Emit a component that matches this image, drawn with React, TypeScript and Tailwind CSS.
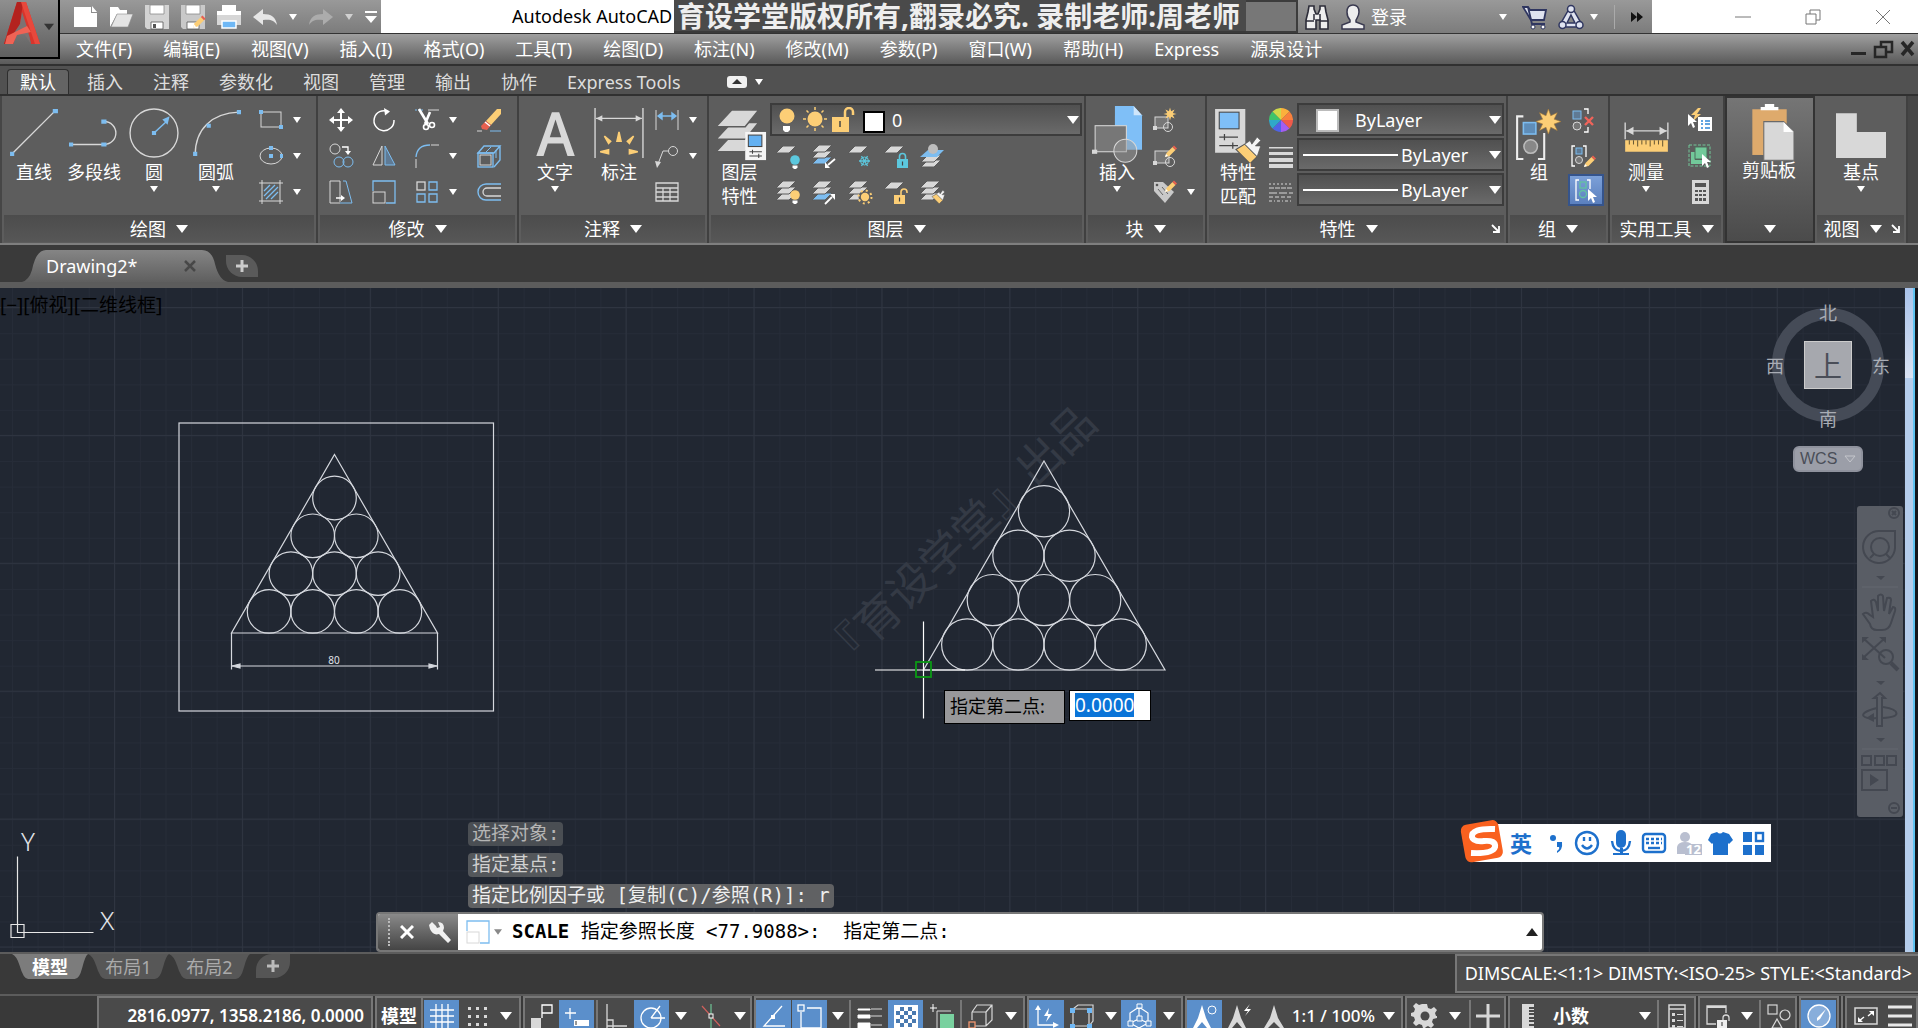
import type { ReactNode } from 'react';

const BLUE = '#7dbdf0';
const GOLD = '#fcce76';
const LIGHT = '#d8d8d8';
const TEAL = '#5cc8de';

const starPoints = (cx: number, cy: number, outer: number, inner: number, spikes: number) =>
  Array.from({ length: spikes * 2 }, (_, i) => {
    const r = i % 2 ? inner : outer;
    const a = (Math.PI * i) / spikes - Math.PI / 2;
    return `${(cx + r * Math.cos(a)).toFixed(1)},${(cy + r * Math.sin(a)).toFixed(1)}`;
  }).join(' ');

const Sheet = ({ x = 0, y = 0, fill = LIGHT }: { x?: number; y?: number; fill?: string }) => (
  <path d={`M${x + 7} ${y}H${x + 20}L${x + 13} ${y + 7}H${x}Z`} fill={fill} stroke="#5a5a5a" strokeWidth="1" />
);

const Pencil = ({ x = 0, y = 0 }: { x?: number; y?: number }) => (
  <g transform={`translate(${x} ${y})`}>
    <path d="M0 11l1.500-4 6-6 3 3-6 6z" fill={GOLD} />
    <path d="M7.500 1l1.500-1.500 3 3-1.500 1.500z" fill="#e8604f" />
    <path d="M0 11l1-3 2 2z" fill="#fff" />
  </g>
);

const Cursor = ({ x = 0, y = 0 }: { x?: number; y?: number }) => (
  <path transform={`translate(${x} ${y})`} d="M0 0v12l3-3 2 5 2-1-2-5h4z" fill="#fff" />
);

const Brush = ({ x = 0, y = 0, s = 1 }: { x?: number; y?: number; s?: number }) => (
  <g transform={`translate(${x} ${y}) scale(${s})`}>
    <path d="M0 4l5-3 7 7-4 4z" fill={GOLD} stroke="#555" strokeWidth=".6" />
    <path d="M5 1l3-2 1 2 3-4 2 2-3 3 3 0-2 6z" fill="#f4f4f4" stroke="#555" strokeWidth=".4" />
  </g>
);

const Bulb = ({ x = 0, y = 0, fill = GOLD }: { x?: number; y?: number; fill?: string }) => (
  <g transform={`translate(${x} ${y})`}>
    <circle cx="5" cy="5" r="4.800" fill={fill} />
    <path d="M2.500 10.500h5v2l-1.500 1.500h-2l-1.500-1.500z" fill="#fff" />
  </g>
);

const Lock = ({ x = 0, y = 0, fill = GOLD, open = false }: { x?: number; y?: number; fill?: string; open?: boolean }) => (
  <g transform={`translate(${x} ${y})`}>
    <path d={open ? 'M7 6V3a3 3 0 0 1 6 0v1' : 'M2.500 6V3.500a3 3 0 0 1 6 0V6'} fill="none" stroke={fill} strokeWidth="1.600" />
    <rect y="6" width="11" height="9" fill={fill} />
    <path d="M5.500 8.500v4" stroke="#444" strokeWidth="1.200" />
  </g>
);

const icons: Record<string, ReactNode> = {
  rect: (
    <>
      <rect x="2" y="4" width="20" height="15" fill="none" stroke={LIGHT} />
      <path d="M0 2h4v4H0zM20 17h4v4h-4z" fill={BLUE} />
    </>
  ),
  ellipse: (
    <>
      <ellipse cx="12" cy="12" rx="11" ry="8" fill="none" stroke={LIGHT} />
      <path d="M10 2h4v4h-4zM10 10h4v4h-4zM21 10h3v4h-3z" fill={BLUE} />
    </>
  ),
  hatch: (
    <>
      <path d="M0 3h24M0 21h24M3 0v24M21 0v24" stroke={LIGHT} />
      <path d="M5 11l6-6M5 16L16 5M7 19L19 7M12 19l7-7" stroke={BLUE} strokeWidth="1.300" />
    </>
  ),
  move: <path d="M12 0l4 5h-3v6h6V8l5 4-5 4v-3h-6v6h3l-4 5-4-5h3v-6H5v3l-5-4 5-4v3h6V5H8z" fill="#fff" />,
  rotate: (
    <>
      <path d="M16 3.500A10 10 0 1 0 22 12" fill="none" stroke="#fff" strokeWidth="1.500" />
      <path d="M12 0l6 3.500-5 4z" fill="#fff" />
    </>
  ),
  trim: (
    <>
      <path d="M0 2h9" stroke={BLUE} strokeDasharray="2 1" />
      <path d="M13 2h11" stroke={LIGHT} />
      <path d="M4 1l9 15M15 4l-5 12" stroke="#fff" strokeWidth="2.600" />
      <circle cx="11" cy="19" r="2.500" fill="none" stroke="#fff" strokeWidth="1.600" />
      <circle cx="17" cy="17" r="2.500" fill="none" stroke="#fff" strokeWidth="1.600" />
    </>
  ),
  erase: (
    <>
      <path d="M9 13L20 1h4v5L14 17z" fill={GOLD} />
      <path d="M9 13l5 4-4 5-5-1-1-3z" fill="#e8604f" />
      <path d="M8 14l5 4" stroke="#fff" strokeWidth="1.500" />
      <path d="M0 23h5" stroke={LIGHT} />
      <path d="M13 23h11" stroke={BLUE} />
    </>
  ),
  copy: (
    <>
      <circle cx="6" cy="5" r="5" fill="none" stroke={LIGHT} />
      <path d="M13 3h6v5" fill="none" stroke="#fff" strokeWidth="1.300" />
      <path d="M16 7h6l-3 4z" fill="#fff" />
      <circle cx="10" cy="18" r="5" fill="none" stroke={BLUE} />
      <circle cx="19" cy="18" r="5" fill="none" stroke={BLUE} />
    </>
  ),
  mirror: (
    <>
      <path d="M10 2v19H1z" fill="none" stroke={LIGHT} />
      <path d="M13 2v19h10z" fill="#5f7a94" stroke={BLUE} />
    </>
  ),
  fillet: (
    <>
      <path d="M1 13Q2 1 15 1" fill="none" stroke={BLUE} strokeWidth="1.300" />
      <path d="M16 1h8M1 15v9" stroke={LIGHT} />
    </>
  ),
  explode: (
    <>
      <path d="M1 9l6-7h16l-6 7zM17 23l6-7V2" fill="none" stroke={BLUE} strokeWidth="1.400" />
      <path d="M9 8l5-5M19 14V6" stroke={BLUE} />
      <rect x="1" y="9" width="15" height="14" fill="none" stroke={BLUE} strokeWidth="1.400" />
      <rect x="3" y="11" width="11" height="10" fill="none" stroke={LIGHT} />
    </>
  ),
  stretch: (
    <>
      <path d="M11 22V1H1v22h10" fill="none" stroke={LIGHT} />
      <path d="M14 1h3l6 22H11" fill="none" stroke={BLUE} />
      <path d="M7 18h6" stroke="#fff" strokeWidth="1.500" />
      <path d="M12 15l4 3-4 3z" fill="#fff" />
    </>
  ),
  scale: (
    <>
      <path d="M1 11V1h22v22H14" fill="none" stroke={BLUE} strokeWidth="1.300" />
      <rect x="1" y="12" width="12" height="11" fill="none" stroke={LIGHT} />
    </>
  ),
  array: (
    <g fill="none">
      <rect x="2" y="2" width="8" height="8" stroke={LIGHT} strokeWidth="1.300" />
      <path d="M14 2h8v8h-8zM2 14h8v8H2zM14 14h8v8h-8z" stroke={BLUE} strokeWidth="1.300" />
    </g>
  ),
  offset: (
    <g fill="none">
      <path d="M24 4H9a7.500 7.500 0 0 0 0 16h15" stroke={BLUE} strokeWidth="1.400" />
      <path d="M24 8H10a4 4 0 0 0 0 8h14" stroke={LIGHT} strokeWidth="1.300" />
    </g>
  ),
  dimLinear: (
    <>
      <path d="M1 2v20M23 2v20" stroke={LIGHT} />
      <path d="M3 8h18M7 5L3 8l4 3zM17 5l4 3-4 3z" fill={BLUE} stroke={BLUE} strokeWidth="1.400" />
    </>
  ),
  leader: (
    <>
      <circle cx="18" cy="7" r="4.500" fill="none" stroke={LIGHT} />
      <path d="M13 7H8L3 20" fill="none" stroke={LIGHT} />
      <path d="M0 17l6 1-4 6z" fill={LIGHT} />
    </>
  ),
  table: <path d="M1 3h22v18H1zM1 8h22M1 12h22M1 17h22M8 8v13M15 8v13" fill="none" stroke={LIGHT} strokeWidth="1.300" />,
  layOff: (
    <>
      <Sheet y={2} />
      <Bulb x={14} y={11} fill={TEAL} />
    </>
  ),
  layIso: (
    <>
      <Sheet y={13} fill={BLUE} />
      <Sheet y={7} />
      <Sheet y={1} />
      <path d="M23 15l-7 6" stroke="#fff" strokeWidth="1.800" />
      <path d="M13 24v-6l5 6z" fill="#fff" />
    </>
  ),
  layFreeze: (
    <>
      <Sheet y={2} />
      <path d="M11 17h11M13.500 12l6 10M19.500 12l-6 10" stroke={TEAL} strokeWidth="1.300" />
      <circle cx="16.500" cy="17" r="4" fill="none" stroke={TEAL} />
    </>
  ),
  layLock: (
    <>
      <Sheet y={2} />
      <Lock x={13} y={9} fill={TEAL} />
    </>
  ),
  layCurrent: (
    <>
      <Sheet y={16} x={1} />
      <Sheet y={11} x={1} />
      <path d="M8 6h16l-7 7H0z" fill={BLUE} />
      <circle cx="13" cy="5" r="5" fill="#bdbdbd" />
    </>
  ),
  layOn: (
    <>
      <Sheet y={13} />
      <Sheet y={7} />
      <Sheet y={1} />
      <Bulb x={14} y={10} />
    </>
  ),
  layUniso: (
    <>
      <Sheet y={13} fill={BLUE} />
      <Sheet y={7} />
      <Sheet y={1} />
      <path d="M13 24l7-7" stroke="#fff" strokeWidth="1.800" />
      <path d="M23 14v6l-5-6z" fill="#fff" />
    </>
  ),
  layThaw: (
    <>
      <Sheet y={13} />
      <Sheet y={7} />
      <Sheet y={1} />
      <circle cx="17" cy="17" r="6.500" fill="#5d5d5d" stroke={GOLD} strokeWidth="2" strokeDasharray="2 3.100" />
      <circle cx="17" cy="17" r="4.200" fill={GOLD} />
    </>
  ),
  layUnlock: (
    <>
      <Sheet y={2} />
      <Lock x={10} y={9} open />
    </>
  ),
  layMatch: (
    <>
      <Sheet y={13} />
      <Sheet y={7} />
      <Sheet y={1} />
      <Brush x={12} y={13} s={0.9} />
    </>
  ),
  blockNew: (
    <>
      <rect x="2" y="9" width="13" height="11" fill="#777" stroke={LIGHT} />
      <circle cx="15" cy="19" r="4.500" fill="none" stroke={LIGHT} />
      <path d="M0 18h4v4H0z" fill={LIGHT} />
      <polygon points={starPoints(17, 6, 6.500, 3, 8)} fill={GOLD} />
    </>
  ),
  blockEdit: (
    <>
      <rect x="2" y="7" width="14" height="12" fill="#777" stroke={LIGHT} />
      <circle cx="17" cy="18" r="4.500" fill="none" stroke={LIGHT} />
      <path d="M0 17h4v4H0z" fill={LIGHT} />
      <Pencil x={12} y={2} />
    </>
  ),
  blockAttr: (
    <>
      <path d="M1 2h9l11 10-9 11L1 11z" fill="#c9c9c9" />
      <path d="M5 9l5 6M9 7l6 7" stroke="#666" />
      <circle cx="4" cy="5" r="1.300" fill="#555" />
      <Pencil x={12} y={1} />
    </>
  ),
  lineweight: <path d="M0 3h24v1.500H0zM0 8h24v3H0zM0 14h24v4H0zM0 20h24v4H0z" fill={LIGHT} />,
  linetype: (
    <g stroke={LIGHT} strokeWidth="1.200">
      <path d="M0 4h24" strokeDasharray="2 2" />
      <path d="M0 8h24" strokeDasharray="5 1" />
      <path d="M0 13h24" strokeDasharray="8 2" />
      <path d="M0 17h24" strokeDasharray="4 2" />
      <path d="M0 21h24" strokeDasharray="3 2 1 2" />
    </g>
  ),
  ungroup: (
    <>
      <path d="M12 1h4v5M12 24h4v-5" fill="none" stroke="#fff" strokeWidth="1.300" />
      <rect x="1" y="3" width="8" height="8" fill="#5f7a94" stroke={BLUE} />
      <circle cx="5" cy="18" r="4" fill="#777" stroke={LIGHT} />
      <path d="M13 9l8 8M21 9l-8 8" stroke="#f0645a" strokeWidth="2.400" />
    </>
  ),
  groupEdit: (
    <>
      <path d="M3 2H0v20h3M11 2h3v11" fill="none" stroke="#fff" strokeWidth="1.300" />
      <rect x="4" y="4" width="6" height="6" fill="#5f7a94" stroke={BLUE} />
      <circle cx="7" cy="16" r="3.500" fill="#777" stroke={LIGHT} />
      <Pencil x={12} y={12} />
    </>
  ),
  groupSelect: (
    <>
      <path d="M5 2H2v20h3M13 2h3v9" fill="none" stroke="#fff" strokeWidth="1.300" />
      <rect x="6" y="4" width="6" height="6" fill="none" stroke="#62c3a0" strokeWidth="1.300" />
      <circle cx="9" cy="16" r="3.500" fill="none" stroke="#62c3a0" strokeWidth="1.300" />
      <Cursor x={14} y={11} />
    </>
  ),
  quickSelect: (
    <>
      <path d="M10 0L3 7h4l-2 6 8-7H9l4-6z" fill={GOLD} />
      <rect x="10" y="9" width="14" height="14" fill="#fff" />
      <path d="M13 13h2M17 13h5M13 16h2M17 16h5M13 20h2M17 20h5" stroke="#2f86d6" strokeWidth="1.500" />
      <Cursor x={0} y={6} />
    </>
  ),
  selectAll: (
    <>
      <rect x="1" y="1" width="21" height="21" fill="none" stroke="#72c99a" strokeDasharray="3 1.500" />
      <path d="M3 8h4v8h9v4H3z" fill="#72c99a" />
      <rect x="7" y="3" width="12" height="12" fill="#72c99a" stroke="#4c6e5c" />
      <Cursor x={14} y={10} />
    </>
  ),
  calc: (
    <>
      <rect x="4" y="0" width="17" height="24" fill={LIGHT} />
      <path d="M7 3h11v4H7z" fill="#555" />
      <path d="M7 10h3v2H7zM11 10h3v2h-3zM15 10h3v2h-3zM7 14h3v2H7zM11 14h3v2h-3zM15 14h3v2h-3zM7 18h3v3H7zM11 18h3v3h-3zM15 18h3v3h-3z" fill="#555" />
    </>
  ),
  new: <path d="M1 2h17v6h6v14H1z M19 1l5 6h-5z" fill="#fff" />,
  open: (
    <>
      <path d="M1 22V2h8l2 3h7v4H8z" fill="#fff" />
      <path d="M8 9h16l-5 13H2z" fill="#e4e4e4" stroke="#8c8c8c" strokeWidth=".6" />
    </>
  ),
  save: (
    <>
      <path d="M0 0h24v24H2l-2-2z" fill="#d3d3d3" />
      <path d="M5 0h14v9H5z" fill="#fff" stroke="#8a8a8a" strokeWidth=".8" />
      <path d="M6 17h12v7H6z" fill="#fff" stroke="#555" strokeWidth=".8" />
      <path d="M8 19h3v4H8z" fill="#555" />
    </>
  ),
  saveAs: (
    <>
      <path d="M0 0h24v24H2l-2-2z" fill="#c9c9c9" />
      <path d="M5 0h14v9H5z" fill="#fff" stroke="#8a8a8a" strokeWidth=".8" />
      <path d="M6 17h12v7H6z" fill="#fff" stroke="#555" strokeWidth=".8" />
      <g transform="translate(12 11) scale(1.050)">
        <Pencil />
      </g>
    </>
  ),
  print: (
    <>
      <path d="M0 8h24v12H0z" fill="#d6d6d6" />
      <path d="M5 0h14v7H5zM0 6h24v4H0z" fill="#fff" />
      <path d="M5 16h14v7H5z" fill="#6fb8f5" stroke="#fff" strokeWidth="1.500" />
    </>
  ),
  undo: <path d="M0 12L10 4v5c8 0 13 3 14 11-3-5-7-6-14-5v5z" fill="#e6e6e6" />,
  redo: <path d="M24 12L14 4v5C6 9 1 12 0 20c3-5 7-6 14-5v5z" fill="#acacac" />,
  infer: (
    <>
      <path d="M13 14V1h10v8H13" fill="none" stroke="#fff" strokeWidth="1.300" />
      <path d="M2 14h10v10H2z" fill={LIGHT} />
    </>
  ),
  grid: <path d="M6 0v24M12 0v24M18 0v24M0 6h24M0 12h24M0 18h24" stroke="#fff" strokeWidth="1.300" />,
  snap: (
    <path
      d="M3 3h3v3H3zM11 3h3v3h-3zM19 3h3v3h-3zM3 11h3v3H3zM11 11h3v3h-3zM19 11h3v3h-3zM3 19h3v3H3zM11 19h3v3h-3zM19 19h3v3h-3z"
      fill={LIGHT}
    />
  ),
  dynInput: (
    <>
      <path d="M0 9h11M5 4v11" stroke="#fff" strokeWidth="1.300" />
      <rect x="9" y="16" width="15" height="6" fill="#fff" />
      <path d="M11 17v4" stroke="#333" />
    </>
  ),
  ortho: <path d="M3 0v24M3 22h20M3 16h6v8" fill="none" stroke={LIGHT} strokeWidth="1.300" />,
  polar: (
    <>
      <circle cx="11" cy="14" r="10" fill="none" stroke="#fff" strokeWidth="1.300" />
      <path d="M11 14h14M11 14L20 2" stroke="#fff" strokeWidth="1.300" />
    </>
  ),
  iso: (
    <>
      <path d="M3 2l18 20" stroke="#d0605c" strokeWidth="1.200" />
      <path d="M12 0v24" stroke="#6fc596" strokeWidth="1.200" />
      <rect x="10" y="10" width="4" height="4" fill="#4a4a4a" stroke="#fff" />
    </>
  ),
  track: (
    <>
      <path d="M20 2L2 22h21" fill="none" stroke="#fff" strokeWidth="1.300" />
      <rect x="9" y="11" width="4" height="4" fill="#fff" />
    </>
  ),
  osnap: (
    <>
      <path d="M9 4h14v20H3V8" fill="none" stroke="#fff" strokeWidth="1.300" />
      <rect x="0" y="1" width="6" height="6" fill="none" stroke="#fff" strokeWidth="1.300" />
    </>
  ),
  lwt: (
    <>
      <path d="M0 5h12v1H0zM0 11h12v3H0zM0 19h12v5H0z" fill="#fff" stroke="#fff" />
      <path d="M13 5h11M13 12h11M13 21h11" stroke={LIGHT} />
    </>
  ),
  transparency: (
    <>
      <rect x="0" y="1" width="24" height="23" fill="#fff" />
      {Array.from({ length: 25 }, (_, i) =>
        i % 2 ? <rect key={i} x={2 + (i % 5) * 4} y={3 + Math.floor(i / 5) * 4} width="4" height="4" fill="#4a7ab0" /> : null
      )}
    </>
  ),
  cycling: (
    <>
      <path d="M0 4h7M3 0v8" stroke="#fff" />
      <path d="M7 24V7h14" fill="none" stroke={LIGHT} />
      <rect x="10" y="10" width="14" height="14" fill="#79d19f" />
    </>
  ),
  snap3d: (
    <>
      <path d="M3 8l5-7h15v15l-6 6H6M3 8h14v14M17 8l6-7M3 8v8" fill="none" stroke={LIGHT} strokeWidth="1.200" />
      <rect x="0" y="18" width="6" height="6" fill="none" stroke="#f2966e" strokeWidth="1.300" />
    </>
  ),
  ucs: (
    <>
      <path d="M3 4v17h17" fill="none" stroke="#fff" strokeWidth="1.300" />
      <path d="M0 6l3-5 3 5zM18 18l6 3-6 3z" fill="#fff" />
      <path d="M14 4L9 12h4l-2 6 6-8h-4z" fill="#fff" />
    </>
  ),
  filter: (
    <>
      <path d="M3 5h16v17H3zM3 5l5-4h15v16l-4 5" fill="none" stroke={LIGHT} strokeWidth="1.200" />
      <path d="M0 4h5v5H0zM17 4h5v5h-5zM0 20h5v4H0zM17 20h5v4h-5z" fill="#6fb8f5" />
    </>
  ),
  gizmo: (
    <>
      <path d="M12 3l9 6v10l-9 5-9-5V9zM12 3v12M3 19l9-4 9 4" fill="none" stroke="#fff" strokeWidth="1.200" />
      <path d="M10 0h5v4h-5zM1 17h5v5H1zM19 17h5v5h-5zM10 12h5v5h-5z" fill="#5f92cc" stroke="#fff" />
    </>
  ),
  annoA: (
    <>
      <path d="M9 1l4 13 5 10h-4l-5-6-5 6H0l5-10z" fill="#fff" />
      <circle cx="19" cy="6" r="4" fill="none" stroke="#fff" />
    </>
  ),
  annoB: (
    <>
      <path d="M9 1l4 13 5 10h-4l-5-6-5 6H0l5-10z" fill={LIGHT} />
      <path d="M22 0l-6 7h4l-3 5 6-7h-4z" fill="#fff" />
    </>
  ),
  annoC: <path d="M11 1l4 13 6 10h-4l-6-6-6 6H1l6-10z" fill={LIGHT} />,
  plus: <path d="M12 0v24M0 12h24" stroke={LIGHT} strokeWidth="3" />,
  units: <path d="M6 0h12v3h-5v2h5v1h-5v2h5v1h-5v2h5v2h-5v2h5v1h-5v2h5v2h-5v2h5v4H6z" fill={LIGHT} />,
  props: (
    <>
      <path d="M4 1h16v23H4zM4 5h16" fill="none" stroke={LIGHT} strokeWidth="1.500" />
      <path d="M7 9h3v3H7zM7 15h3v3H7zM7 21h3v3H7zM12 10h6v1h-6zM12 16h6v1h-6zM12 22h6v1h-6z" fill={LIGHT} />
    </>
  ),
  lockUi: (
    <>
      <path d="M20 9V2H1v18h9" fill="none" stroke={LIGHT} strokeWidth="1.300" />
      <path d="M1 2h19v2H1z" fill={LIGHT} />
      <path d="M17 17v-3a3 3 0 0 1 6 0v3" fill="none" stroke={LIGHT} strokeWidth="1.300" />
      <path d="M11 16h10v8H11z" fill="#eee" />
      <path d="M16 18v4" stroke="#333" />
    </>
  ),
  isolate: (
    <g fill="none" stroke={LIGHT} strokeWidth="1.200">
      <rect x="1" y="1" width="9" height="9" />
      <circle cx="18" cy="11" r="5" />
      <path d="M10 15l5 9H5z" />
    </g>
  ),
  perf: (
    <>
      <circle cx="12" cy="12" r="11" fill="#88aedb" stroke="#fff" strokeWidth="1.300" />
      <path d="M19 5l-6 10-3 2v-3z" fill="#fff" />
    </>
  ),
  clean: (
    <>
      <rect x="1" y="4" width="22" height="16" fill="none" stroke={LIGHT} strokeWidth="1.500" />
      <path d="M15 7h5v5zM4 13v5h5z" fill="#fff" />
      <path d="M14 12l5-4M5 17l5-4" stroke="#fff" strokeWidth="1.500" />
    </>
  ),
  menu: <path d="M0 3h24M0 12h24M0 21h24" stroke="#e8e8e8" strokeWidth="3" />,
  gear: (
    <>
      <path
        d="M10 0h4l1 4 3 1 3-2 3 3-2 3 1 3h1v2l-4 1-1 3 2 3-3 3-3-2-2 1-1 1h-2l-1-3-3-1-3 2-3-3 2-3-1-3-3-1v-3l3-1 1-3-2-3 3-3 3 2 3-1z"
        fill={LIGHT}
      />
      <circle cx="12" cy="12" r="4.500" fill="#4a4a4a" />
    </>
  ),
};

const Icon = ({ name }: { name: string }) => (
  <svg className="size-6 shrink-0 overflow-visible" viewBox="0 0 24 24" aria-hidden="true">
    {icons[name]}
  </svg>
);

const Caret = ({ big = false }: { big?: boolean }) => (
  <svg className={big ? 'h-2 w-3 shrink-0' : 'h-[6px] w-2 shrink-0'} viewBox="0 0 12 8" preserveAspectRatio="none" aria-hidden="true">
    <path d="M0 0h12L6 8z" fill="#fff" />
  </svg>
);

const Tool = ({ name, label, caret = false }: { name: string; label: string; caret?: boolean }) => (
  <button className="flex h-9 items-center gap-[10px]" aria-label={label}>
    <Icon name={name} />
    {caret && <Caret />}
  </button>
);

interface BigProps {
  label: string[];
  width: string;
  caret?: boolean;
  children: ReactNode;
}

const BigTool = ({ label, width, caret = false, children }: BigProps) => (
  <button className={`flex shrink-0 flex-col items-center self-start pt-[6px] ${width}`}>
    <svg className="mb-[2px] size-[50px] overflow-visible" viewBox="0 0 48 48" aria-hidden="true">
      {children}
    </svg>
    {label.map((l) => (
      <span key={l} className="leading-6 whitespace-nowrap">
        {l}
      </span>
    ))}
    {caret && (
      <span className="mt-[2px]">
        <Caret />
      </span>
    )}
  </button>
);

interface PanelProps {
  title: string;
  width: string;
  launcher?: boolean;
  children: ReactNode;
}

const Panel = ({ title, width, launcher = false, children }: PanelProps) => (
  <section className={`flex shrink-0 flex-col border-r-2 border-[#404040] bg-[#5d5d5d] ${width}`}>
    <div className="flex h-[119px] pt-[6px]">{children}</div>
    <div
      className={`relative mx-[2px] flex h-[27px] items-center justify-center bg-linear-to-b from-[#4c4c4c] to-[#575757] ${
        launcher ? 'pr-4' : ''
      }`}
    >
      <button className="flex items-center gap-[10px]">
        {title}
        <Caret big />
      </button>
      {launcher && (
        <svg className="absolute right-1 size-[9px]" viewBox="0 0 9 9" aria-hidden="true">
          <path d="M1 1l6 6M8 2v6H2" fill="none" stroke="#fff" strokeWidth="1.800" />
        </svg>
      )}
    </div>
  </section>
);

const menus = [
  '文件(F)', '编辑(E)', '视图(V)', '插入(I)', '格式(O)', '工具(T)', '绘图(D)', '标注(N)',
  '修改(M)', '参数(P)', '窗口(W)', '帮助(H)', 'Express', '源泉设计',
];

const ribbonTabs = ['默认', '插入', '注释', '参数化', '视图', '管理', '输出', '协作', 'Express Tools'];

const TitleBar = () => (
  <header className="relative">
    <button className="absolute top-0 left-0 z-10 flex h-[59px] w-[60px] items-center border-r-2 border-b-2 border-black bg-linear-to-b from-[#8f8f8f] to-[#606060]" aria-label="A">
      <svg className="mb-3 ml-1 h-[46px] w-9" viewBox="0 0 36 46" preserveAspectRatio="none" aria-hidden="true">
        <path d="M0 44L13 2h9l14 42h-9l-2-9-12-2-4 11z" fill="#d8352c" />
        <path d="M13 2h6l-3 22-7 20H0z" fill="#b3221f" />
        <path d="M16 24l2-12 5 15 4 17-6-9-11-2z" fill="#7d7272" />
        <path d="M3 36l20-10 4 6-14 3-4 9H1z" fill="#ef6355" />
        <path d="M22 2l14 42h-5L17 2z" fill="#e8483c" />
      </svg>
      <svg className="mb-1 ml-1 h-2 w-[10px]" viewBox="0 0 12 8" aria-hidden="true">
        <path d="M0 0h12L6 8z" fill="#333" />
      </svg>
    </button>
    <div className="flex h-[33px] bg-white">
      <div className="flex w-[381px] shrink-0 items-center gap-3 bg-linear-to-b from-[#999] to-[#7c7c7c] pl-[73px]">
        {['new', 'open', 'save', 'saveAs', 'print', 'undo'].map((n) => (
          <button key={n} aria-label={n}>
            <Icon name={n} />
          </button>
        ))}
        <Caret />
        <button aria-label="redo">
          <Icon name="redo" />
        </button>
        <span className="opacity-60">
          <Caret />
        </span>
        <svg className="h-3 w-3" viewBox="0 0 12 12" aria-hidden="true">
          <path d="M0 0h12v2H0zM0 5h12L6 12z" fill="#fff" />
        </svg>
      </div>
      <div className="flex-1 pl-[131px] leading-[33px] whitespace-nowrap text-black">Autodesk AutoCAD</div>
      <div className="flex w-[572px] shrink-0 items-center border-b-2 border-[#3a3a3a] bg-[#4a4a4a] pl-[3px] text-[28px] leading-[30px] font-bold whitespace-nowrap text-[#eee]">
        育设学堂版权所有,翻录必究. 录制老师:周老师
      </div>
      <div className="w-[52px] shrink-0 border-2 border-l-0 border-[#3c3c3c] bg-[#777]" />
      <div className="flex w-[354px] shrink-0 items-center bg-linear-to-b from-[#999] to-[#7c7c7c] pl-[6px]">
        <svg className="size-[26px]" viewBox="0 0 26 26" aria-hidden="true">
          <path d="M5 2h5v3l2 5h2l2-5V2h5l1 6 2 8v9h-8v-9h-4v9H2v-9l2-8z" fill="#eee" stroke="#2c2c38" strokeWidth="1.600" />
          <path d="M2 17h8M16 17h8M10 10v6M16 10v6" stroke="#2c2c38" strokeWidth="1.500" />
        </svg>
        <svg className="ml-[10px] size-[26px]" viewBox="0 0 26 26" aria-hidden="true">
          <path d="M13 1c4 0 6 3 6 7s-2 6-3 8v2l8 3v4H2v-4l8-3v-2C8 14 7 12 7 8s2-7 6-7z" fill="#eee" stroke="#3a3a50" strokeWidth="1.500" />
        </svg>
        <button className="ml-[5px]">登录</button>
        <span className="ml-[92px]">
          <Caret />
        </span>
        <svg className="ml-[15px] size-[26px]" viewBox="0 0 26 26" aria-hidden="true">
          <path d="M1 3h5l2 3h16l-2 10H9z" fill="#dfe3f0" stroke="#2f3660" strokeWidth="1.800" />
          <path d="M6 3l4 17h13" fill="none" stroke="#2f3660" strokeWidth="1.800" />
          <circle cx="11" cy="23" r="2" fill="#fff" stroke="#2f3660" />
          <circle cx="21" cy="23" r="2" fill="#fff" stroke="#2f3660" />
        </svg>
        <svg className="ml-[10px] size-[26px]" viewBox="0 0 26 26" aria-hidden="true">
          <g fill="#dfe3f0" stroke="#2f3660" strokeWidth="1.500">
            <path d="M11 5L3 19l3 4h14l3-4L15 5zM13 11l4 8H9z" fillRule="evenodd" />
            <circle cx="13" cy="5" r="3.500" />
            <circle cx="4.500" cy="21" r="3.500" />
            <circle cx="21.500" cy="21" r="3.500" />
          </g>
        </svg>
        <span className="ml-[6px]">
          <Caret />
        </span>
        <span className="ml-4 h-6 w-px bg-[#aaa]" />
        <svg className="ml-4 h-[10px] w-3" viewBox="0 0 12 10" aria-hidden="true">
          <path d="M0 0l6 5-6 5zM6 0l6 5-6 5z" fill="#111" />
        </svg>
      </div>
      <div className="flex w-[266px] shrink-0 items-center justify-end gap-[54px] pr-[27px]">
        {['M0 8h16', 'M1 5h10v10H1zM5 5V1h10v10h-4', 'M1 1l14 14M15 1L1 15'].map((d) => (
          <button key={d}>
            <svg className="size-4" viewBox="0 0 16 16" aria-hidden="true">
              <path d={d} fill="none" stroke="#777" />
            </svg>
          </button>
        ))}
      </div>
    </div>
    <nav className="flex h-[33px] items-center gap-px border-t border-b-2 border-t-[#333] border-b-[#303030] bg-linear-to-b from-[#a0a0a0] to-[#5a5a5a] pl-[61px]">
      {menus.map((m) => (
        <button key={m} className="px-[15px] leading-[30px] whitespace-nowrap">
          {m}
        </button>
      ))}
      <svg className="mr-[3px] ml-auto h-5 w-[64px]" viewBox="0 0 64 20" aria-hidden="true">
        <path d="M0 13h15v3H0z" fill="#262626" />
        <path d="M24 8h11v10H24zM30 8V3h11v10h-6" fill="none" stroke="#262626" strokeWidth="2.500" />
        <path d="M51 3l11 13M62 3L51 16" stroke="#262626" strokeWidth="3.500" />
      </svg>
    </nav>
    <div className="flex h-[30px] items-end gap-[6px] border-b-2 border-[#303030] bg-[#515151] pl-[7px] text-[#ddd]">
      {ribbonTabs.map((t, i) => (
        <button
          key={t}
          className={
            i === 0
              ? 'h-[25px] rounded-t-sm border border-b-0 border-[#2e2e2e] bg-[#646464] px-3 leading-6 text-white'
              : 'h-[25px] px-3 leading-6 whitespace-nowrap'
          }
        >
          {t}
        </button>
      ))}
      <button className="ml-7 flex h-[25px] items-center gap-2" aria-label="最小化">
        <svg className="h-3 w-5" viewBox="0 0 20 12" aria-hidden="true">
          <rect width="20" height="12" rx="3" fill="#f0f0f0" />
          <path d="M5 8h10l-5-5z" fill="#333" />
        </svg>
        <Caret />
      </button>
    </div>
  </header>
);

const ComboCaret = () => (
  <span className="pointer-events-none absolute top-1/2 right-[3px] flex -translate-y-1/2">
    <Caret big />
  </span>
);

const comboClass =
  'h-full w-full appearance-none border-2 border-[#3c3c3c] bg-linear-to-b from-[#505050] to-[#6a6a6a] leading-7 text-white';

const Ribbon = () => (
  <div className="flex h-[149px] border-b-2 border-[#7f7f7f] bg-[#464646] pl-[2px]">
    <Panel title="绘图" width="w-[316px]">
      <BigTool label={['直线']} width="w-[64px]">
        <path d="M3 44L44 3" stroke={LIGHT} strokeWidth="1.300" />
        <path d="M1 42h4v4H1zM42 1h5v4h-5z" fill={BLUE} />
      </BigTool>
      <BigTool label={['多段线']} width="w-[56px]">
        <path d="M2 35h32a11 11 0 0 0 0-22" fill="none" stroke={LIGHT} strokeWidth="1.300" />
        <path d="M0 33h4v4H0zM31 33h5v4h-5zM31 11h5v4h-5z" fill={BLUE} />
      </BigTool>
      <BigTool label={['圆']} width="w-[64px]" caret>
        <circle cx="24" cy="24" r="23" fill="none" stroke={LIGHT} strokeWidth="1.300" />
        <path d="M24 24L37 12" stroke={BLUE} strokeWidth="1.500" />
        <path d="M22 22h4v4h-4zM39 8l-2 8-5-5z" fill={BLUE} />
      </BigTool>
      <BigTool label={['圆弧']} width="w-[60px]" caret>
        <path d="M4 45C4 20 20 5 46 4" fill="none" stroke={LIGHT} strokeWidth="1.300" />
        <path d="M2 42h4v4H2zM44 2h4v4h-4zM15 15h4v4h-4z" fill={BLUE} />
      </BigTool>
      <div className="ml-[13px] flex flex-col">
        <Tool name="rect" label="矩形" caret />
        <Tool name="ellipse" label="椭圆" caret />
        <Tool name="hatch" label="图案填充" caret />
      </div>
    </Panel>
    <Panel title="修改" width="w-[201px]">
      <div className="ml-[11px] grid grid-cols-[43px_43px_62px_24px] content-start">
        <Tool name="move" label="移动" />
        <Tool name="rotate" label="旋转" />
        <Tool name="trim" label="修剪" caret />
        <Tool name="erase" label="删除" />
        <Tool name="copy" label="复制" />
        <Tool name="mirror" label="镜像" />
        <Tool name="fillet" label="圆角" caret />
        <Tool name="explode" label="分解" />
        <Tool name="stretch" label="拉伸" />
        <Tool name="scale" label="缩放" />
        <Tool name="array" label="阵列" caret />
        <Tool name="offset" label="偏移" />
      </div>
    </Panel>
    <Panel title="注释" width="w-[190px]">
      <BigTool label={['文字']} width="ml-1 w-[64px]" caret>
        <path d="M6 46L21 4h7l15 42h-7l-4-12H17l-4 12z M19 28h11l-5.500-17z" fill={LIGHT} fillRule="evenodd" />
      </BigTool>
      <BigTool label={['标注']} width="w-[64px]">
        <path d="M1 0v48M47 0v48M2 10h44" stroke={LIGHT} strokeWidth="1.300" />
        <path d="M2 10l6-3v6zM46 10l-6-3v6z" fill={LIGHT} />
        <path d="M22 32l2-9 2 9zM14 34l-4-7 6 5zM34 34l4-7-6 5zM6 42l8-2v4zM42 42l-8-2v4z" fill={GOLD} stroke={GOLD} strokeWidth="1.500" />
      </BigTool>
      <div className="ml-[4px] flex flex-col">
        <Tool name="dimLinear" label="线性" caret />
        <Tool name="leader" label="引线" caret />
        <Tool name="table" label="表格" />
      </div>
    </Panel>
    <Panel title="图层" width="w-[377px]">
      <BigTool label={['图层', '特性']} width="w-[61px]">
        {[34, 22, 10].map((y) => (
          <path key={y} d={`M16 ${y - 8}h26L29 ${y + 8}H1z`} fill={LIGHT} stroke="#5d5d5d" strokeWidth="1.500" />
        ))}
        <rect x="29" y="23" width="20" height="27" fill="#f5f5f5" />
        <rect x="32" y="26" width="13" height="11" fill="#64b1f2" stroke="#444" />
        <path d="M33 42h12M33 46h12M36 40v4M42 44v4" stroke="#444" />
      </BigTool>
      <div className="flex flex-1 flex-col pr-[2px]">
        <div className="relative mt-px mb-[2px] h-[33px]">
          <select aria-label="图层" className={`${comboClass} pl-[120px]`}>
            <option>0</option>
          </select>
          <svg className="pointer-events-none absolute top-1 left-2 h-[26px] w-[108px]" viewBox="0 0 108 26" aria-hidden="true">
            <circle cx="9" cy="9" r="7.500" fill={GOLD} />
            <path d="M5 19h7v4l-2 2H7l-2-2z" fill="#fff" />
            <path
              d="M37 0v3M37 21v3M25 12h3M46 12h3M28.500 3.500l2 2M43.500 18.500l2 2M28.500 20.500l2-2M43.500 5.500l2-2"
              stroke={GOLD}
              strokeWidth="1.500"
            />
            <circle cx="37" cy="12" r="7.500" fill={GOLD} />
            <path d="M67 11V5a4 4 0 0 1 8 0v3" fill="none" stroke={GOLD} strokeWidth="2.500" />
            <path d="M54 10h17v15H54z" fill={GOLD} />
            <path d="M62 14v6" stroke="#444" strokeWidth="1.500" />
            <rect x="86" y="5" width="20" height="20" fill="#fff" stroke="#000" strokeWidth="2" />
          </svg>
          <ComboCaret />
        </div>
        <div className="ml-[6px] grid grid-cols-[repeat(5,36px)]">
          {['layOff', 'layIso', 'layFreeze', 'layLock', 'layCurrent', 'layOn', 'layUniso', 'layThaw', 'layUnlock', 'layMatch'].map((n) => (
            <Tool key={n} name={n} label={n} />
          ))}
        </div>
      </div>
    </Panel>
    <Panel title="块" width="w-[121px]">
      <BigTool label={['插入']} width="w-[62px]" caret>
        <path d="M22-2h18l8 9v33H22z" fill="#7fbff7" />
        <path d="M40-2l8 9h-8z" fill="#cfe6fb" />
        <rect x="3" y="17" width="30" height="25" fill="#777" stroke={LIGHT} />
        <circle cx="32" cy="41" r="11" fill="#999" fillOpacity=".5" stroke={LIGHT} />
        <path d="M0 40h5v4H0z" fill={LIGHT} />
      </BigTool>
      <div className="ml-[5px] flex flex-col">
        <Tool name="blockNew" label="创建块" />
        <Tool name="blockEdit" label="编辑块" />
        <Tool name="blockAttr" label="编辑属性" caret />
      </div>
    </Panel>
    <Panel title="特性" width="w-[301px]" launcher>
      <BigTool label={['特性', '匹配']} width="w-[62px]">
        <path d="M2 1h29v42H2z" fill={LIGHT} />
        <rect x="6" y="4" width="19" height="16" fill="#7fbff7" stroke="#444" />
        <path d="M6 28h18M6 36h18M11 25v6M19 33v6" stroke="#444" strokeWidth="1.200" />
        <Brush x={22} y={33} s={1.7} />
      </BigTool>
      <div className="flex w-[28px] flex-col">
        <button className="flex h-9 items-center" aria-label="颜色">
          <svg className="size-6" viewBox="-12 -12 24 24" aria-hidden="true">
            {['#fbb03c', '#f9803c', '#ef5a4a', '#a35df0', '#4f63e6', '#2fa8c9', '#3fc46b', '#cfd94a'].map((c, i) => (
              <path key={c} d="M0 0V-12A12 12 0 0 1 8.500-8.500Z" fill={c} transform={`rotate(${i * 45})`} />
            ))}
          </svg>
        </button>
        <Tool name="lineweight" label="线宽" />
        <Tool name="linetype" label="线型" />
      </div>
      <div className="flex flex-1 flex-col gap-[2px] pt-px pr-[2px]">
        <div className="relative h-[33px]">
          <select aria-label="颜色" className={`${comboClass} pl-14`}>
            <option>ByLayer</option>
          </select>
          <span className="pointer-events-none absolute top-[6px] left-[19px] size-[23px] border-2 border-[#bbb] bg-white" />
          <ComboCaret />
        </div>
        {['线宽值', '线型值'].map((l) => (
          <div key={l} className="relative h-[33px]">
            <select aria-label={l} className={`${comboClass} pl-[102px]`}>
              <option>ByLayer</option>
            </select>
            <span className="pointer-events-none absolute top-4 left-[6px] h-[2px] w-[95px] bg-white" />
            <ComboCaret />
          </div>
        ))}
      </div>
    </Panel>
    <Panel title="组" width="w-[102px]">
      <BigTool label={['组']} width="w-[62px]">
        <path d="M9 8H3v41h6M23 49h6V24" fill="none" stroke="#eee" strokeWidth="2" />
        <rect x="9" y="14" width="12" height="11" fill="#5f8db8" stroke={BLUE} strokeWidth="1.500" />
        <circle cx="16" cy="37" r="6.500" fill="#888" stroke="#bbb" strokeWidth="1.500" />
        <polygon points={starPoints(33, 13, 12, 6, 8)} fill={GOLD} stroke="#a77c3a" strokeWidth=".6" />
      </BigTool>
      <div className="ml-[2px] flex flex-col">
        <Tool name="ungroup" label="解除编组" />
        <Tool name="groupEdit" label="组编辑" />
        <button className="-ml-1 flex h-8 w-9 items-center justify-center border-2 border-[#35548c] bg-linear-to-b from-[#7ca0d8] to-[#5b80be]" aria-label="组选择">
          <Icon name="groupSelect" />
        </button>
      </div>
    </Panel>
    <Panel title="实用工具" width="w-[115px]">
      <BigTool label={['测量']} width="ml-1 w-[64px]" caret>
        <path d="M4 14v16M45 14v16M5 22h39" stroke={LIGHT} strokeWidth="1.300" />
        <path d="M5 22l7-4v8zM44 22l-7-4v8z" fill={LIGHT} />
        <path d="M4 31h41v11H4z" fill={GOLD} />
        <path d="M8 31v4M12 31v4M16 31v6M20 31v4M24 31v4M28 31v6M32 31v4M36 31v4M40 31v6" stroke="#6b5a35" />
      </BigTool>
      <div className="ml-[10px] flex flex-col">
        <Tool name="quickSelect" label="快速选择" />
        <Tool name="selectAll" label="全部选择" />
        <Tool name="calc" label="计算器" />
      </div>
    </Panel>
    <section className="flex w-[90px] shrink-0 flex-col items-center border-2 border-[#333] bg-linear-to-b from-[#757575] to-[#4b4b4b] pt-[2px]">
      <BigTool label={['剪贴板']} width="w-[84px]">
        <path d="M8 3h33v44H8z" fill="#deaa6c" />
        <path d="M16 4V1h4v-3h9v3h4v3z" fill="#fff" />
        <path d="M19 15h19l10 9v28H19z" fill={LIGHT} stroke="#6a6a6a" />
        <path d="M38 15l9 10h-9z" fill="#fff" />
        <path d="M8 47h10v6H8z" fill="#616161" />
      </BigTool>
      <button className="mt-auto mb-2" aria-label="展开">
        <Caret big />
      </button>
    </section>
    <Panel title="视图" width="w-[93px]" launcher>
      <BigTool label={['基点']} width="ml-[14px] w-[64px]" caret>
        <path d="M0 5h20v18h28v25H0z" fill={LIGHT} />
      </BigTool>
    </Panel>
  </div>
);

const FileTabs = () => (
  <div className="flex h-[43px] items-end border-b-[6px] border-[#5c5c5c] bg-[#3a3a3a] pl-[22px]">
    <div className="relative flex h-8 w-[206px] items-center pl-6">
      <svg className="absolute inset-0 h-full w-full" viewBox="0 0 206 32" preserveAspectRatio="none" aria-hidden="true">
        <defs>
          <linearGradient id="tabFill" x2="0" y2="1">
            <stop stopColor="#858585" />
            <stop offset="1" stopColor="#5f5f5f" />
          </linearGradient>
        </defs>
        <path d="M0 32Q7 30 10 20Q14 0 24 0H180Q190 0 193 14Q197 30 206 32Z" fill="url(#tabFill)" />
      </svg>
      <button className="relative">Drawing2*</button>
      <button className="relative mr-[32px] ml-auto" aria-label="关闭">
        <svg className="size-3" viewBox="0 0 12 12" aria-hidden="true">
          <path d="M1 1l10 10M11 1L1 11" stroke="#484848" strokeWidth="2.500" />
        </svg>
      </button>
    </div>
    <button className="mb-[5px] -ml-[2px] flex h-[22px] w-8 items-center justify-center rounded-tr-2xl rounded-bl-2xl bg-[#5a5a5a]" aria-label="新图形">
      <svg className="size-3" viewBox="0 0 12 12" aria-hidden="true">
        <path d="M6 0v12M0 6h12" stroke="#ccc" strokeWidth="3" />
      </svg>
    </button>
  </div>
);

const circleRows = [1, 2, 3, 4];

interface StackProps {
  cx: number;
  top: number;
  r: number;
  dy: number;
}

// four rows of touching circles
const CircleStack = ({ cx, top, r, dy }: StackProps) => (
  <>
    {circleRows.map((n, row) =>
      Array.from({ length: n }, (_, i) => (
        <circle key={`${row}-${i}`} cx={cx + (2 * i - row) * r} cy={top + row * dy} r={r} />
      ))
    )}
  </>
);

const Drawing = () => (
  <svg className="absolute top-0 left-0 h-full w-full" aria-hidden="true">
    <defs>
      <pattern id="minor" x="12" y="-6" width="25.580" height="25.580" patternUnits="userSpaceOnUse">
        <path d="M0 .5h25.580M.5 0v25.580" stroke="#262c38" fill="none" />
      </pattern>
      <pattern id="major" x="114" y="19" width="127.900" height="127.900" patternUnits="userSpaceOnUse">
        <path d="M0 .5h127.900M.5 0v127.900" stroke="#2f3541" fill="none" />
      </pattern>
    </defs>
    <rect width="100%" height="100%" fill="url(#minor)" />
    <rect width="100%" height="100%" fill="url(#major)" />
    <text x="959" y="267" fontSize="45" fill="#343a45" textAnchor="middle" transform="rotate(-44 959 251)">
      『育设学堂』出品
    </text>
    <g fill="none" stroke="#d5d8de" strokeWidth="1.200" transform="translate(0 -.5)">
      <rect x="179" y="135.500" width="314.500" height="288" />
      <path d="M334.500 167L437.500 345.500H231.500ZM231.500 345v37M437.500 345v37M232 378.500h205" />
      <CircleStack cx={334.5} top={210.5} r={21.8} dy={37.8} />
      <path d="M232 378.500l8-2v4zM437 378.500l-8-2v4z" fill="#d5d8de" />
      <path d="M1044 173.500L1165 382.500H923.500Z" />
      <CircleStack cx={1044} top={223.8} r={25.6} dy={44.4} />
      <path d="M875 382.500h90M923.500 334v97" stroke="#fff" />
      <rect x="916" y="374.500" width="15" height="15" stroke="#0a9a14" strokeWidth="1.800" />
      <path d="M17.500 569v76h76M11 637h13v13H11z" stroke="#e8e8e8" />
    </g>
    <g fill="#e0e3e8" textAnchor="middle">
      <text x="334" y="376" fontSize="10">80</text>
      <text x="28" y="563" fontSize="26" fontWeight="300">Y</text>
      <text x="107" y="642" fontSize="26" fontWeight="300">X</text>
    </g>
  </svg>
);

const ViewCube = () => (
  <div className="absolute top-[12px] right-[28px] flex flex-col items-center font-['Noto_Sans_CJK_SC',sans-serif] text-[#a9adb5]">
    <div className="relative grid h-[130px] w-[124px] grid-cols-3 grid-rows-3 place-items-center">
      <span className="absolute inset-x-[6px] inset-y-[8px] rounded-full border-[12px] border-[#454b57]" />
      <span className="relative col-start-2 self-start leading-6">北</span>
      <span className="relative col-start-1 row-start-2 justify-self-start">西</span>
      <button className="relative col-start-2 row-start-2 size-[48px] border border-[#ccc] bg-[#a6a8ae] text-[28px] leading-[44px] text-[#4a4e58]">上</button>
      <span className="relative col-start-3 row-start-2 justify-self-end">东</span>
      <span className="relative col-start-2 row-start-3 self-end leading-6">南</span>
    </div>
    <button className="mt-4 flex h-[26px] w-[70px] items-center justify-between rounded-md border-2 border-[#8f929d] bg-[#9b9ea8] px-[5px] font-['Liberation_Sans',sans-serif] text-base text-[#4a4e58]">
      WCS
      <svg className="h-2 w-3" viewBox="0 0 12 8" aria-hidden="true">
        <path d="M1 1h10L6 7z" fill="none" stroke="#c4c6cc" />
      </svg>
    </button>
  </div>
);

const NavBar = () => (
  <svg className="absolute top-[218px] right-[15px] h-[311px] w-[46px]" viewBox="0 0 46 311" aria-hidden="true">
    <rect width="46" height="311" rx="3" fill="#595d65" />
    <path d="M5 81h36M5 243h36" stroke="#656971" />
    <g fill="none" stroke="#444851" strokeWidth="2">
      <circle cx="37" cy="7" r="5" />
      <path d="M35 5l4 4M39 5l-4 4" />
      <path d="M23 25h15v17a16 16 0 1 1-15-17z" />
      <circle cx="23" cy="41" r="9" />
      <path d="M13 52l4-4M33 52l-4-4" />
      <path d="M13 118L6 108q3-3 7 1l3 2-2-16q3-3 5 1l2 9v-15q3-3 5 0l1 15 3-13q4-1 4 2l-2 14 4-7q3 0 2 4l-4 12q-2 7-9 7h-5q-6 0-7-6z" />
      <path d="M6 132l22 20M28 132L6 152" />
      <circle cx="29" cy="151" r="7" />
      <path d="M34 157l7 7" strokeWidth="4" />
      <path d="M20 220v-28h-3l6-5 5 5h-3v28z" />
      <path d="M20 202C-4 208 8 214 20 212M26 201c18 3 18 10 0 11" />
      <path d="M5 250h9v9H5zM18 250h9v9h-9zM30 250h9v9h-9zM5 264h25v20H5z" />
      <circle cx="37" cy="302" r="5" />
      <path d="M34 302h6" />
    </g>
    <path d="M5 131h7l-7 6zM22 131h7v6zM5 154v-6l7 6zM9 212l8-5v9zM13 268l9 6-9 6zM19 70h9l-4 4zM19 175h9l-4 4zM19 232h9l-4 4z" fill="#444851" />
  </svg>
);

const ImeBar = () => (
  <div className="absolute top-[536px] right-[147px] flex h-[38px] w-[298px] items-center bg-white pl-[37px] text-[#1d70cc]">
    <svg className="absolute top-[-6px] left-[-14px] size-[48px]" viewBox="0 0 48 48" aria-hidden="true">
      <rect x="4" y="4" width="38" height="38" rx="6" fill="#f9611f" transform="rotate(-10 24 24)" />
      <path d="M36 11Q12 10 13 19Q14 24 25 23Q37 22 36 29Q34 36 12 35" fill="none" stroke="#fff" strokeWidth="6" />
    </svg>
    <span className="text-[22px] font-bold">英</span>
    <svg className="ml-[15px] h-8 w-[216px] shrink-0 overflow-visible" viewBox="0 0 216 32" aria-hidden="true">
      <g fill="#1d70cc">
        <circle cx="6" cy="11" r="3" />
        <path d="M10 15h5q1 8-5 11v-2q3-2 2-4h-2z" />
        <rect x="69" y="3" width="10" height="18" rx="5" />
        <path d="M66 26h16v2H66zM73 21h3v6h-3z" />
        <path d="M164 7l6-2q3 3 6 0l6 2 4 6-4 4-1-1v12h-15V16l-1 1-4-4z" />
        <path d="M196 5h9v10h-9zM196 18h9v10h-9zM208 18h9v10h-9z" />
      </g>
      <g fill="none" stroke="#1d70cc" strokeWidth="2.400">
        <circle cx="40" cy="16" r="11" />
        <path d="M35 18q5 7 10 0M37 10v4M43 10v4" />
        <path d="M65 14q1 10 9 10t9-10" />
        <rect x="96" y="7" width="22" height="18" rx="3" />
        <path d="M99 12h16M99 16h16" strokeDasharray="3 2" />
        <path d="M101 21h12" />
        <rect x="209" y="6" width="7" height="8" />
      </g>
      <g fill="#b9bfd0">
        <circle cx="138" cy="10" r="5" />
        <path d="M130 27V20q1-5 8-5t8 5v7z" />
        <rect x="138" y="17" width="17" height="11" />
      </g>
      <text x="139" y="27" fontSize="13" fontWeight="700" fill="#fff">12</text>
    </svg>
  </div>
);

const monoClass = "font-['DejaVu_Sans_Mono','Noto_Sans_CJK_SC',monospace] text-[19px]";

const CommandLine = () => (
  <div className="absolute bottom-0 left-[376px] w-[1168px]">
    <div className={`ml-[92px] flex flex-col items-start gap-[7px] pb-1 ${monoClass}`}>
      <span className="h-6 rounded-sm bg-[#4a4e53] px-1 leading-[22px] text-[#b5b5b5]">选择对象:</span>
      <span className="h-6 rounded-sm bg-[#54575b] px-1 leading-[22px] text-[#d0d0d0]">指定基点:</span>
      <span className="h-6 rounded-sm bg-[#606163] px-1 leading-[22px] text-[#eee]">指定比例因子或 [复制(C)/参照(R)]: r</span>
    </div>
    <div className="flex h-10 overflow-hidden rounded border-2 border-[#777] bg-white">
      <div className="flex w-20 shrink-0 items-center gap-[10px] bg-linear-to-b from-[#8a8a8a] to-[#454545] pl-[10px]">
        <span className="h-7 border-l-2 border-dotted border-[#bbb]" />
        <button aria-label="关闭">
          <svg className="size-[14px]" viewBox="0 0 14 14" aria-hidden="true">
            <path d="M1 1l12 12M13 1L1 13" stroke="#fff" strokeWidth="3" />
          </svg>
        </button>
        <button aria-label="自定义" className="ml-1">
          <svg className="size-6" viewBox="0 0 24 24" aria-hidden="true">
            <path d="M4 2l4 4 1 2 3-1-2-5q6 0 6 6l-1 3 8 9-3 3-9-9q-6 2-9-5l-1-4z" fill="#f0f0f0" />
          </svg>
        </button>
      </div>
      <div className="flex items-center gap-1 pl-2">
        <Icon name="scale" />
        <svg className="h-[6px] w-2" viewBox="0 0 12 8" aria-hidden="true">
          <path d="M0 0h12L6 8z" fill="#888" />
        </svg>
      </div>
      <label htmlFor="cmd" className={`ml-[10px] leading-[35px] whitespace-pre text-black ${monoClass}`}>
        <b>SCALE</b> 指定参照长度 {'<77.9088>:  指定第二点:'}
      </label>
      <input id="cmd" className="min-w-0 flex-1 text-black outline-none" />
      <svg className="mt-[14px] mr-[4px] h-2 w-3" viewBox="0 0 12 8" aria-hidden="true">
        <path d="M0 8h12L6 0z" fill="#222" />
      </svg>
    </div>
  </div>
);

const Canvas = () => (
  <main className="relative min-h-0 flex-1 overflow-hidden bg-[#212732]">
    <Drawing />
    <button className="absolute top-[5px] left-0 text-[19px] text-black">[−][俯视][二维线框]</button>
    <div className="absolute top-[402px] left-[944px] flex items-start gap-1">
      <label htmlFor="dyn" className="h-[34px] w-[121px] border border-black bg-[#98989a] pl-[5px] leading-[30px] text-black">
        指定第二点:
      </label>
      <div className="h-[31px] w-[82px] border border-black bg-white pt-[2px] pl-[5px]">
        <input id="dyn" defaultValue="0.0000" className="block h-6 w-[59px] bg-[#0a74d8] text-[19px] text-white outline-none" />
      </div>
    </div>
    <ViewCube />
    <NavBar />
    <div className="absolute inset-y-0 right-0 w-[13px] border-r-[3px] border-r-[#14161c] bg-[#b5cdec] shadow-[inset_-2px_0_0_#5fc4f2]">
      <div className="h-[90px] w-2 bg-linear-to-b from-[#a9c2ea] to-[#d9e2f2]" />
    </div>
    <ImeBar />
    <CommandLine />
  </main>
);

const layoutTabs = ['模型', '布局1', '布局2'];

const LayoutTabs = () => (
  <div className="flex h-[42px] items-start border-t-2 border-[#5c5c5c] bg-[#393939] pl-[12px]">
    {layoutTabs.map((t, i) => (
      <button key={t} className={i === 0 ? 'relative h-[25px] w-[76px] font-bold' : 'relative h-[25px] w-[81px] text-[#aaa]'}>
        <svg className="absolute inset-0 h-full w-full" viewBox="0 0 80 26" preserveAspectRatio="none" aria-hidden="true">
          <path d="M0 0Q5 2 8 12Q12 26 17 26H66Q71 26 74 14Q77 2 80 0Z" fill={i === 0 ? '#7c7c7c' : '#575757'} />
        </svg>
        <span className="relative block leading-6">{t}</span>
      </button>
    ))}
    <button className="ml-[6px] flex h-6 w-[34px] items-center justify-center rounded-tl-2xl rounded-br-2xl bg-[#555]" aria-label="新布局">
      <svg className="size-3" viewBox="0 0 12 12" aria-hidden="true">
        <path d="M6 0v12M0 6h12" stroke="#bbb" strokeWidth="3" />
      </svg>
    </button>
    <div className="ml-auto h-[39px] border-2 border-r-0 border-[#777] bg-[#4c4c4c] pr-[6px] pl-2 leading-[34px] whitespace-nowrap">
      DIMSCALE:&lt;1:1&gt; DIMSTY:&lt;ISO-25&gt; STYLE:&lt;Standard&gt;
    </div>
  </div>
);

const StatusButton = ({ name, on = false, width = 'w-[35px]' }: { name: string; on?: boolean; width?: string }) => (
  <button className={`flex h-10 shrink-0 justify-center pt-1 ${width} ${on ? 'bg-[#5b8fcb]' : ''}`} aria-label={name}>
    <Icon name={name} />
  </button>
);

const StatusCaret = ({ width = 'w-6' }: { width?: string }) => (
  <span className={`flex h-10 shrink-0 justify-center pt-3 ${width}`}>
    <Caret big />
  </span>
);

const StatusGroup = ({ width, children }: { width: string; children: ReactNode }) => (
  <div className={`flex shrink-0 justify-between border-2 border-[#777] bg-[#4a4a4a] pt-[2px] ${width}`}>{children}</div>
);

const Rule = () => <span className="h-10 w-[2px] shrink-0 bg-[#777]" />;

const StatusBar = () => (
  <footer className="flex h-[34px] items-start gap-[2px] overflow-hidden border-t-2 border-[#5c5c5c] bg-[#393939] pl-[97px]">
    <div className="h-11 w-[276px] shrink-0 border-2 border-[#777] bg-[#4a4a4a] pt-[6px] pr-[7px] text-right text-[17px] leading-6 font-semibold whitespace-nowrap">
      2816.0977, 1358.2186, 0.0000
    </div>
    <div className="flex h-11 shrink-0 border-2 border-[#777] bg-[#4a4a4a]">
      <button className="flex w-[46px] shrink-0 justify-center border-r-2 border-[#777] pt-[6px] leading-6 font-bold">模型</button>
      <div className="flex w-[96px] items-start pt-[2px] pl-px">
        <StatusButton name="grid" on />
        <StatusButton name="snap" />
        <StatusCaret />
      </div>
    </div>
    <StatusGroup width="w-[229px]">
      <StatusButton name="infer" width="w-8" />
      <StatusButton name="dynInput" on />
      <Rule />
      <StatusButton name="ortho" width="w-8" />
      <StatusButton name="polar" on />
      <StatusCaret width="w-5" />
      <StatusButton name="iso" />
      <StatusCaret width="w-5" />
    </StatusGroup>
    <StatusGroup width="w-[271px]">
      <StatusButton name="track" on />
      <StatusButton name="osnap" on />
      <StatusCaret width="w-5" />
      <Rule />
      <StatusButton name="lwt" />
      <StatusButton name="transparency" on />
      <StatusButton name="cycling" />
      <Rule />
      <StatusButton name="snap3d" />
      <StatusCaret width="w-6" />
    </StatusGroup>
    <StatusGroup width="w-[156px]">
      <StatusButton name="ucs" on />
      <StatusButton name="filter" />
      <StatusCaret width="w-5" />
      <StatusButton name="gizmo" on />
      <StatusCaret width="w-6" />
    </StatusGroup>
    <StatusGroup width="w-[218px]">
      <StatusButton name="annoA" on />
      <StatusButton name="annoB" />
      <StatusButton name="annoC" width="w-8" />
      <button className="flex items-start gap-2 pr-[6px] whitespace-nowrap">
        <span className="pt-1 text-[17px] leading-6 font-medium">1:1 / 100%</span>
        <span className="pt-3">
          <Caret big />
        </span>
      </button>
    </StatusGroup>
    <StatusGroup width="w-[101px]">
      <StatusButton name="gear" />
      <StatusCaret />
      <Rule />
      <StatusButton name="plus" width="w-8" />
    </StatusGroup>
    <StatusGroup width="w-[188px]">
      <StatusButton name="units" />
      <button className="mr-auto ml-2 flex items-start pt-1 leading-6 font-bold">小数</button>
      <StatusCaret />
      <Rule />
      <StatusButton name="props" />
    </StatusGroup>
    <StatusGroup width="w-[99px]">
      <StatusButton name="lockUi" />
      <StatusCaret width="w-5" />
      <Rule />
      <StatusButton name="isolate" width="w-8" />
    </StatusGroup>
    <StatusGroup width="w-[40px]">
      <StatusButton name="perf" on />
    </StatusGroup>
    <Rule />
    <StatusGroup width="w-[73px] pl-[3px]">
      <StatusButton name="clean" width="w-8" />
      <StatusButton name="menu" width="w-8" />
    </StatusGroup>
  </footer>
);

const App = () => (
  <div className="flex h-screen flex-col overflow-hidden bg-[#393939] font-['Noto_Sans','Noto_Sans_CJK_SC',sans-serif] text-[18px] leading-6 text-white">
    <TitleBar />
    <Ribbon />
    <FileTabs />
    <Canvas />
    <LayoutTabs />
    <StatusBar />
  </div>
);

export default App;
